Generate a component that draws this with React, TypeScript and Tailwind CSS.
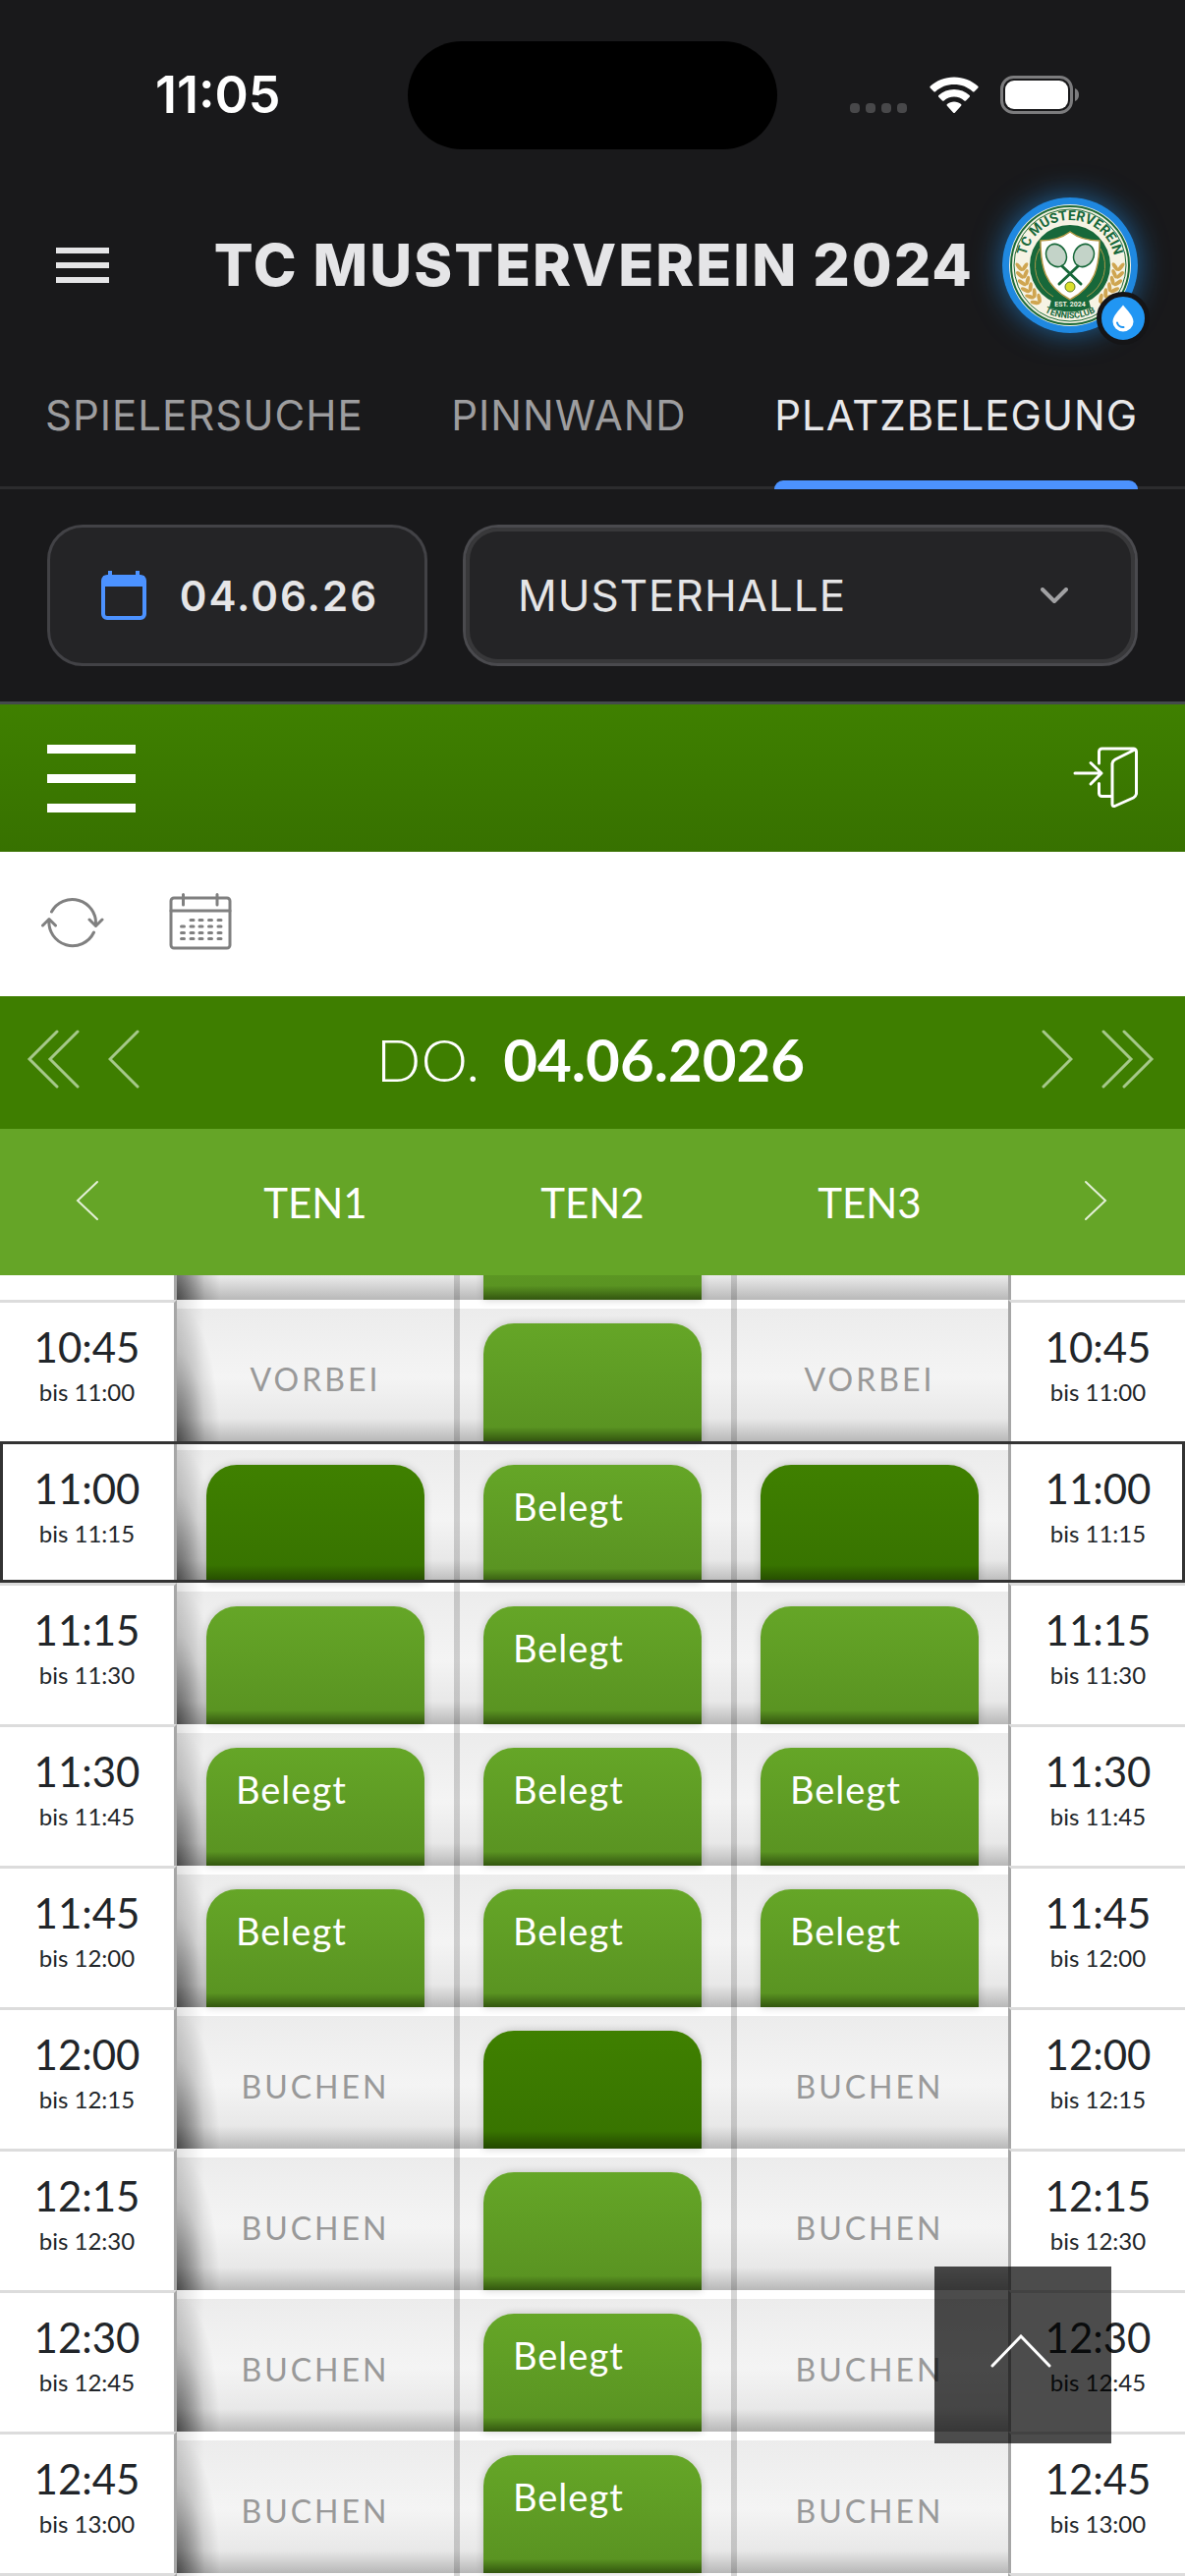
import { useLayoutEffect, useRef, useState } from "react";

type Slot = "leer" | "vorbei" | "buchen" | "start" | "frei" | "belegt";

interface Row {
  from?: string;
  to?: string;
  slots: Slot[];
  current?: boolean;
}

const courts = ["TEN1", "TEN2", "TEN3"];

const rows: Row[] = [
  { slots: ["leer", "frei", "leer"] },
  { from: "10:45", to: "11:00", slots: ["vorbei", "frei", "vorbei"] },
  { from: "11:00", to: "11:15", slots: ["start", "belegt", "start"], current: true },
  { from: "11:15", to: "11:30", slots: ["frei", "belegt", "frei"] },
  { from: "11:30", to: "11:45", slots: ["belegt", "belegt", "belegt"] },
  { from: "11:45", to: "12:00", slots: ["belegt", "belegt", "belegt"] },
  { from: "12:00", to: "12:15", slots: ["buchen", "start", "buchen"] },
  { from: "12:15", to: "12:30", slots: ["buchen", "frei", "buchen"] },
  { from: "12:30", to: "12:45", slots: ["buchen", "belegt", "buchen"] },
  { from: "12:45", to: "13:00", slots: ["buchen", "belegt", "buchen"] },
  { slots: ["leer", "leer", "leer"] },
];

const tabs = ["SPIELERSUCHE", "PINNWAND", "PLATZBELEGUNG"];

const StatusBar = () => (
  <div className="grid grid-cols-[1fr_376px_1fr] items-center pt-[42px]">
    <p className="pl-[158px] font-[Inter,sans-serif] text-[52px] leading-[60px] font-semibold text-white">
      11:05
    </p>
    <div className="h-[110px] rounded-full bg-black" />
    <div className="flex items-center justify-end gap-[22px] pr-[107px]">
      <svg width="59" height="38" viewBox="0 0 59 38" fill="#48484a">
        <rect x="0" y="27" width="10" height="10" rx="4" />
        <rect x="16" y="27" width="10" height="10" rx="4" />
        <rect x="32" y="27" width="10" height="10" rx="4" />
        <rect x="48" y="27" width="10" height="10" rx="4" />
      </svg>
      <svg width="50" height="38" viewBox="0 0 50 38" fill="#fff">
        <path d="M25 0.500C34.500 0.500 43 4 49.300 9.800c0.500 0.500 0.500 1.200 0 1.700l-3.700 3.700c-0.500 0.500-1.200 0.500-1.700 0C39 10.600 32.300 8 25 8S11 10.600 6.100 15.200c-0.500 0.500-1.200 0.500-1.700 0L0.700 11.500c-0.500-0.500-0.500-1.200 0-1.700C7 4 15.500 0.500 25 0.500z" />
        <path d="M25 13c6 0 11.500 2.300 15.700 6 0.500 0.500 0.500 1.200 0 1.700l-3.700 3.700c-0.500 0.500-1.200 0.500-1.700 0.100C32.500 22 29 20.500 25 20.500S17.500 22 14.700 24.500c-0.500 0.400-1.200 0.400-1.700-0.100l-3.700-3.700c-0.500-0.500-0.500-1.200 0-1.700C13.500 15.300 19 13 25 13z" />
        <path d="M25 25.500c2.700 0 5.200 1 7.100 2.600 0.500 0.500 0.500 1.200 0 1.700l-6.300 6.900c-0.400 0.500-1.200 0.500-1.600 0l-6.300-6.900c-0.500-0.500-0.500-1.200 0-1.700 1.900-1.600 4.400-2.600 7.100-2.600z" />
      </svg>
      <svg width="81" height="40" viewBox="0 0 81 40">
        <rect x="1.500" y="1.500" width="71" height="36" rx="12" fill="none" stroke="#7c7c7e" strokeWidth="3" />
        <rect x="5" y="5" width="64" height="29" rx="9" fill="#fff" />
        <path d="M76 13c3 1 4 4 4 6.500s-1 5.500-4 6.500z" fill="#7c7c7e" />
      </svg>
    </div>
  </div>
);

const leaves = [0, 1, 2, 3, 4, 5];

const ClubLogo = () => (
  <svg width="138" height="138" viewBox="0 0 138 138">
    <defs>
      <path id="arc-top" d="M23 69a46 46 0 0 1 92 0" />
      <path id="arc-bottom" d="M15 69a54 54 0 0 0 108 0" />
    </defs>
    <circle cx="69" cy="69" r="69" fill="#1f88e0" />
    <circle cx="69" cy="69" r="62" fill="#f6f3e4" />
    <circle cx="69" cy="69" r="60" fill="none" stroke="#1d6b38" strokeWidth="2" />
    <circle cx="69" cy="69" r="57" fill="none" stroke="#1d6b38" strokeWidth="1" />
    <circle cx="69" cy="69" r="41" fill="#17683a" />
    <path d="M38 52a36 36 0 0 0 14 49M100 52a36 36 0 0 1-14 49" fill="none" stroke="#a8974a" strokeWidth="1" />
    <text fill="#17683a" className="font-[Roboto,sans-serif] text-[14px] font-bold">
      <textPath href="#arc-top" startOffset="50%" textAnchor="middle">
        TC MUSTERVEREIN
      </textPath>
    </text>
    {leaves.map((i) => (
      <g key={i} fill="#cfa550">
        <g transform={`rotate(${-2 - i * 9} 69 69)`}>
          <ellipse cx="17" cy="69" rx="2" ry="5" transform="rotate(-35 17 69)" />
          <ellipse cx="23" cy="69" rx="2" ry="5" transform="rotate(35 23 69)" />
        </g>
        <g transform={`rotate(${2 + i * 9} 69 69)`}>
          <ellipse cx="121" cy="69" rx="2" ry="5" transform="rotate(35 121 69)" />
          <ellipse cx="115" cy="69" rx="2" ry="5" transform="rotate(-35 115 69)" />
        </g>
      </g>
    ))}
    <path d="M69 35c8 6 18 9 30 9 0 26-4 46-30 60C43 90 39 70 39 44c12 0 22-3 30-9z" fill="#fff" stroke="#b79a48" strokeWidth="1.500" />
    <g stroke="#17683a" fill="#c3d3c8" strokeWidth="1.500">
      <ellipse cx="55" cy="59" rx="10" ry="12" transform="rotate(-28 55 59)" />
      <ellipse cx="83" cy="59" rx="10" ry="12" transform="rotate(28 83 59)" />
    </g>
    <path d="M61 70l19 18M77 70L58 88" stroke="#17683a" strokeWidth="3" strokeLinecap="round" />
    <circle cx="69" cy="91" r="5" fill="#dbe02c" stroke="#5c7a22" strokeWidth="1" />
    <path d="M50 104q19 7 38 0l2 8q-21 9-42 0z" fill="#17683a" />
    <text x="69" y="111" textAnchor="middle" fill="#f6f3e4" className="font-[Roboto,sans-serif] text-[7px] font-bold">
      EST. 2024
    </text>
    <text fill="#17683a" className="font-[Roboto,sans-serif] text-[9px] font-bold">
      <textPath href="#arc-bottom" startOffset="50%" textAnchor="middle">
        TENNISCLUB
      </textPath>
    </text>
  </svg>
);

const Header = () => (
  <header className="flex items-center justify-between pt-[49px] pr-12 pl-[57px]">
    <button aria-label="Menü" className="flex w-[54px] shrink-0 flex-col gap-[9px]">
      <span className="h-[6px] bg-[#e5e5e7]" />
      <span className="h-[6px] bg-[#e5e5e7]" />
      <span className="h-[6px] bg-[#e5e5e7]" />
    </button>
    <h1 className="ml-auto pr-[29px] font-[Inter,sans-serif] text-[59px] leading-[72px] font-extrabold tracking-[2px] whitespace-nowrap text-[#e5e5e7]">
      TC MUSTERVEREIN 2024
    </h1>
    <button aria-label="Verein" className="relative shrink-0 rounded-full shadow-[0_0_30px_rgba(33,150,243,0.6)]">
      <ClubLogo />
      <span className="absolute -right-[12px] -bottom-[12px] flex size-[54px] items-center justify-center rounded-full border-5 border-[#151517] bg-[#2196f3]">
        <svg width="22" height="28" viewBox="0 0 22 28">
          <path d="M11 0.500C15 5.500 21.500 11.500 21.500 17.500a10.500 10 0 0 1-21 0C0.500 11.500 7 5.500 11 0.500z" fill="#fff" />
          <path d="M5 18.500a6 6 0 0 0 6.500 4.500" fill="none" stroke="#2196f3" strokeWidth="2" strokeLinecap="round" />
        </svg>
      </span>
    </button>
  </header>
);

const Tabs = () => {
  const [active, setActive] = useState("PLATZBELEGUNG");
  return (
    <nav className="mt-[45px] flex justify-between border-b-3 border-[#2c2c2e] pr-12 pl-[46px] font-[Inter,sans-serif] text-[42px] leading-[50px]">
      {tabs.map((tab) => (
        <button
          key={tab}
          onClick={() => setActive(tab)}
          className={`relative pt-[14px] pb-[47px] tracking-[1px] ${
            active === tab ? "text-[#e8e8ea]" : "text-[#9d9d9f]"
          }`}
        >
          {tab}
          {active === tab && (
            <span className="absolute inset-x-0 -bottom-[3px] h-[9px] rounded-t-[9px] bg-[#4c92ff]" />
          )}
        </button>
      ))}
    </nav>
  );
};

const Filters = () => (
  <div className="flex gap-9 border-b-3 border-[#444a4c] px-12 py-9 font-[Inter,sans-serif] text-[#e5e5e7]">
    <button className="flex h-[144px] w-[387px] shrink-0 items-center justify-between rounded-[36px] border-3 border-[#424246] bg-[#242426] pr-[47px] pl-[52px] text-[42px] font-semibold tracking-[2px]">
      <svg width="46" height="50" viewBox="0 0 46 50">
        <path d="M9 0v6M37 0v6" stroke="#4c92ff" strokeWidth="4" />
        <rect x="2" y="6" width="42" height="42" rx="4" fill="none" stroke="#4c92ff" strokeWidth="4" />
        <path d="M2 5h42v11H2z" fill="#4c92ff" />
      </svg>
      04.06.26
    </button>
    <div className="relative flex-1">
      <select
        aria-label="Halle"
        className="h-[144px] w-full appearance-none rounded-[36px] border-3 border-[#4a4a4e] bg-[#242426] pl-[53px] text-[44px] tracking-[1px] shadow-[inset_0_0_0_4px_#38383a] outline-none"
      >
        <option>MUSTERHALLE</option>
      </select>
      <svg className="pointer-events-none absolute top-[64px] right-[71px]" width="28" height="18" viewBox="0 0 28 18">
        <path d="M2 2l12 12L26 2" fill="none" stroke="#a1a1a3" strokeWidth="4" strokeLinecap="round" strokeLinejoin="round" />
      </svg>
    </div>
  </div>
);

const Toolbar = () => (
  <>
    <div className="flex h-[150px] items-center justify-between bg-linear-to-b from-[#3f8000] to-[#377100] px-12">
      <button aria-label="Navigation" className="flex w-[90px] flex-col gap-[21px]">
        <span className="h-[9px] bg-white" />
        <span className="h-[9px] bg-white" />
        <span className="h-[9px] bg-white" />
      </button>
      <button aria-label="Anmelden" className="pb-[3px]">
        <svg width="66" height="62" viewBox="0 0 66 62" fill="none" stroke="#fff" strokeWidth="3" strokeLinecap="round" strokeLinejoin="round">
          <path d="M26.500 17V5a3 3 0 0 1 3-3h32a3 3 0 0 1 3 3v43a6 6 0 0 1-3 4L42.500 60.500c-1.500 0.500-2.500-0.500-2.500-2V17a6 6 0 0 1 3-4L62 3.500M26.500 37.500v10a3 3 0 0 0 3 3H39" />
          <path d="M2 27h27M18 16.500L29 27 18 38" />
        </svg>
      </button>
    </div>
    <div className="flex h-[147px] items-center gap-[66px] bg-white px-[42px] pb-[6px]">
      <button aria-label="Aktualisieren">
        <svg width="64" height="58" viewBox="0 0 64 58" fill="none" stroke="#808080" strokeWidth="3" strokeLinecap="round" strokeLinejoin="round">
          <path d="M10.500 19A24 24 0 0 1 55.500 32M49 27l6.500 6.500L62 27" />
          <path d="M53.500 40A24 24 0 0 1 8 27M1.500 33L8 26.500l6.500 6.500" />
        </svg>
      </button>
      <button aria-label="Kalender">
        <svg width="64" height="58" viewBox="0 0 64 58" fill="none" stroke="#808080" strokeWidth="3" strokeLinecap="round">
          <rect x="2" y="5" width="60" height="51" rx="3" />
          <path d="M2 18h60M14.500 1.500v10.500M49 1.500v10.500" />
          <path d="M22 27.500h3M31 27.500h3M40.500 27.500h3M50 27.500h3M12.500 34h3M22 34h3M31 34h3M40.500 34h3M50 34h3M12.500 40.500h3M22 40.500h3M31 40.500h3M40.500 40.500h3M50 40.500h3M12.500 46.500h3M22 46.500h3M31 46.500h3M40.500 46.500h3M50 46.500h3" />
        </svg>
      </button>
    </div>
  </>
);

const DateBar = () => (
  <div className="flex h-[135px] items-center justify-between bg-[#3e7e00] pr-[31px] pb-[7px] pl-[27px] text-white">
    <div className="flex gap-[29px]">
      <button aria-label="Woche zurück">
        <svg width="54" height="60" viewBox="0 0 54 60" fill="none" stroke="#a6c88a" strokeWidth="3" strokeLinecap="round">
          <path d="M31 2L3 30l28 28M52 2L24 30l28 28" />
        </svg>
      </button>
      <button aria-label="Tag zurück">
        <svg width="32" height="60" viewBox="0 0 32 60" fill="none" stroke="#a6c88a" strokeWidth="3" strokeLinecap="round">
          <path d="M30 2L2 30l28 28" />
        </svg>
      </button>
    </div>
    <p className="text-[60px] leading-[72px]">
      <span className="mr-6 font-light">DO.</span>
      <span className="font-bold">04.06.2026</span>
    </p>
    <div className="flex gap-[29px]">
      <button aria-label="Tag vor">
        <svg width="32" height="60" viewBox="0 0 32 60" fill="none" stroke="#a6c88a" strokeWidth="3" strokeLinecap="round">
          <path d="M2 2l28 28L2 58" />
        </svg>
      </button>
      <button aria-label="Woche vor">
        <svg width="54" height="60" viewBox="0 0 54 60" fill="none" stroke="#a6c88a" strokeWidth="3" strokeLinecap="round">
          <path d="M2 2l28 28L2 58M23 2l28 28-28 28" />
        </svg>
      </button>
    </div>
  </div>
);

const SlotCell = ({ slot }: { slot: Slot }) => {
  if (slot === "leer") return null;
  if (slot === "vorbei" || slot === "buchen") {
    return (
      <button className="flex h-full w-full items-center justify-center pt-[18px] text-[32px] leading-[40px] tracking-[3px] text-[#999]">
        {slot === "vorbei" ? "VORBEI" : "BUCHEN"}
      </button>
    );
  }
  return (
    <div className="flex h-full px-[30px] pt-6">
      <div
        className={`flex-1 rounded-t-[31px] px-[30px] pt-[18px] text-[38px] leading-[48px] tracking-[1px] text-white shadow-[0_0_9px_rgba(0,0,0,0.2)] ${
          slot === "start"
            ? "bg-[linear-gradient(to_bottom,#3f8000,#387400_85%,#234800)]"
            : "bg-[linear-gradient(to_bottom,#65a627,#5a9422_88%,#33560f)]"
        }`}
      >
        {slot === "belegt" && "Belegt"}
      </div>
    </div>
  );
};

const TimeCell = ({ row, side }: { row: Row; side: "left" | "right" }) => (
  <th
    scope="row"
    className={`border-t-3 border-t-[#dcdcdc] bg-white p-0 font-normal text-[#212529] ${
      side === "left" ? "border-r-3 border-r-[#a6a6a6]" : "border-l-3 border-l-[#a6a6a6]"
    }`}
  >
    <div className="flex h-[141px] flex-col items-center pt-[20px]">
      {row.from && (
        <>
          <span className="text-[42px] leading-[50px]">{row.from}</span>
          <span className="text-[24px] leading-[42px]">bis {row.to}</span>
        </>
      )}
    </div>
  </th>
);

const Schedule = () => {
  const scroller = useRef<HTMLDivElement>(null);

  // start just above the current quarter hour
  useLayoutEffect(() => {
    if (scroller.current) scroller.current.scrollTop = 119;
  }, []);

  const scrollUp = () => scroller.current?.scrollTo({ top: 0, behavior: "smooth" });

  return (
    <div ref={scroller} className="min-h-0 flex-1 overflow-y-auto bg-white [scrollbar-width:none]">
      <table className="w-full table-fixed border-separate border-spacing-0">
        <thead className="sticky top-0 z-10">
          <tr className="h-[149px] bg-[#65a527] text-[42px] text-white">
            <th className="w-[180px] p-0 align-middle">
              <button aria-label="Vorherige Plätze" className="block px-[77px] pb-[3px]">
                <svg width="24" height="42" viewBox="0 0 24 42" fill="none" stroke="#e4f0d8" strokeWidth="2" strokeLinecap="round">
                  <path d="M22 2L2 21l20 19" />
                </svg>
              </button>
            </th>
            {courts.map((court) => (
              <th key={court} scope="col" className="p-0 pt-[2px] font-normal">
                {court}
              </th>
            ))}
            <th className="w-[180px] p-0 align-middle">
              <button aria-label="Nächste Plätze" className="block px-[77px] pb-[3px]">
                <svg width="24" height="42" viewBox="0 0 24 42" fill="none" stroke="#e4f0d8" strokeWidth="2" strokeLinecap="round">
                  <path d="M2 2l20 19L2 40" />
                </svg>
              </button>
            </th>
          </tr>
        </thead>
        <tbody>
          {rows.map((row, n) => (
            <tr key={n} className={row.current ? "outline-3 -outline-offset-3 outline-[#333]" : ""}>
              <TimeCell row={row} side="left" />
              {row.slots.map((slot, i) => (
                <td key={i} className="p-0">
                  <div
                    className={`h-[144px] ${
                      i === 0
                        ? "bg-[linear-gradient(to_right,rgba(0,0,0,0.12),transparent_28px),radial-gradient(44px_140px_at_0_100%,rgba(0,0,0,0.55),rgba(0,0,0,0.12)_65%,transparent),linear-gradient(to_bottom,#fff_9px,#ececec_9px,#f4f4f4_55%,#e8e8e8_84%,#b8b8b8)]"
                        : "bg-[linear-gradient(to_right,rgba(0,0,0,0.16)_6px,transparent_6px),linear-gradient(to_bottom,#fff_9px,#ececec_9px,#f4f4f4_55%,#e8e8e8_84%,#b8b8b8)]"
                    }`}
                  >
                    <SlotCell slot={slot} />
                  </div>
                </td>
              ))}
              <TimeCell row={row} side="right" />
            </tr>
          ))}
        </tbody>
      </table>
      <button
        aria-label="Nach oben"
        onClick={scrollUp}
        className="fixed right-[75px] bottom-[135px] z-20 flex size-[180px] items-center justify-center bg-black/70 pr-[4px] pb-[8px]"
      >
        <svg width="62" height="34" viewBox="0 0 62 34" fill="none" stroke="#fff" strokeWidth="3" strokeLinecap="round">
          <path d="M2 32L31 2l29 30" />
        </svg>
      </button>
    </div>
  );
};

const App = () => (
  <div className="flex h-screen flex-col overflow-hidden bg-[#19191b] font-[Lato,sans-serif]">
    <StatusBar />
    <Header />
    <Tabs />
    <Filters />
    <Toolbar />
    <DateBar />
    <Schedule />
  </div>
);

export default App;
